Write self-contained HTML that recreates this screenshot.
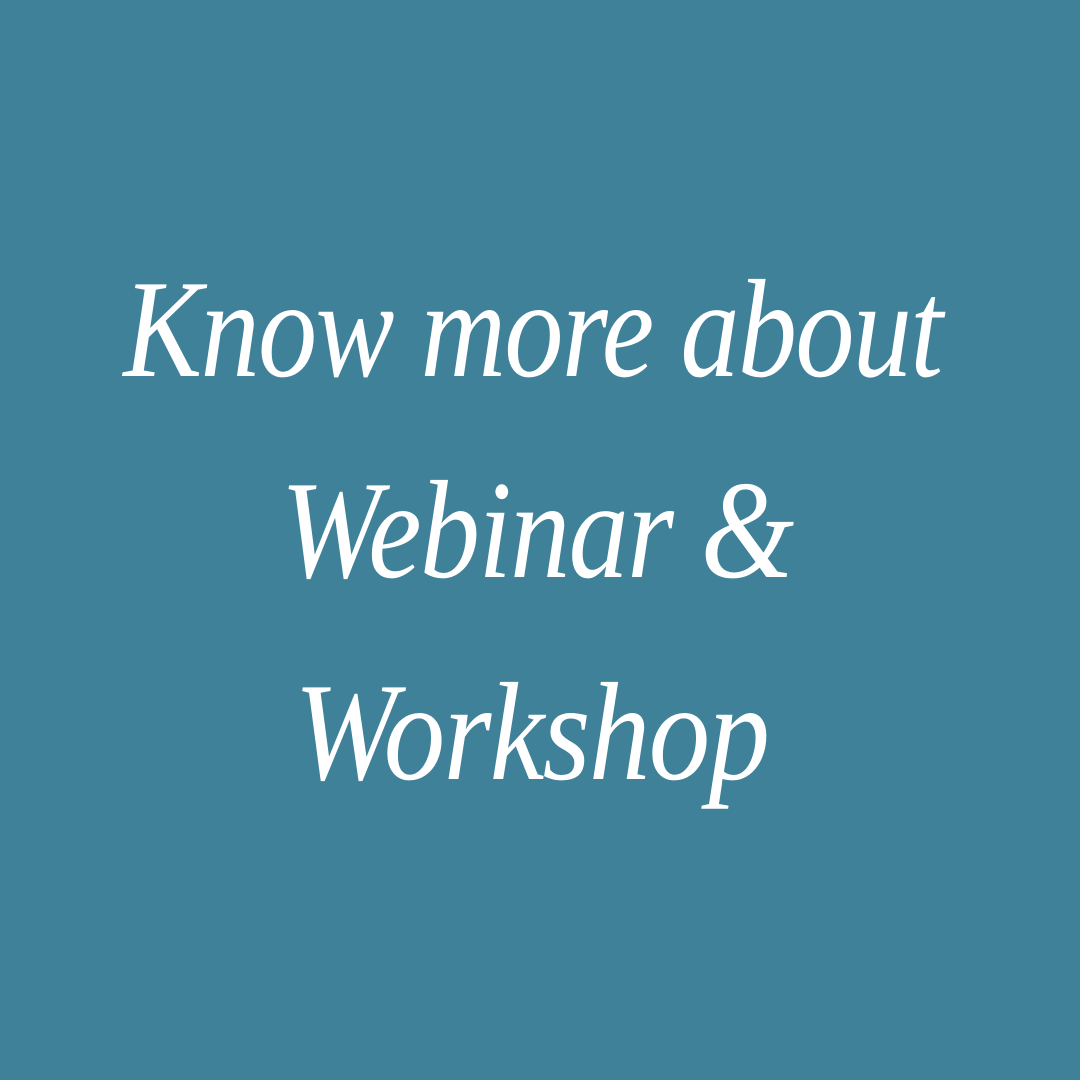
<!DOCTYPE html>
<html><head><meta charset="utf-8"><style>
html,body{margin:0;padding:0}
body{width:1080px;height:1080px;background:#3f8199;position:relative;overflow:hidden}
.l{position:absolute;left:0;width:1080px;text-align:center;color:#fff;font-family:"Liberation Serif",serif;font-style:italic;font-size:140px;line-height:1;white-space:nowrap;letter-spacing:-2px;transform:scaleX(0.86);transform-origin:540px 0}
</style></head><body>
<div class="l" style="top:260px;transform:scaleX(0.845) translateX(-9px)">Know more about</div>
<div class="l" style="top:461px;transform:scaleX(0.86) translateX(-4px)">Webinar &amp;</div>
<div class="l" style="top:663px;transform:scaleX(0.88) translateX(-10px)">Workshop</div>
</body></html>
